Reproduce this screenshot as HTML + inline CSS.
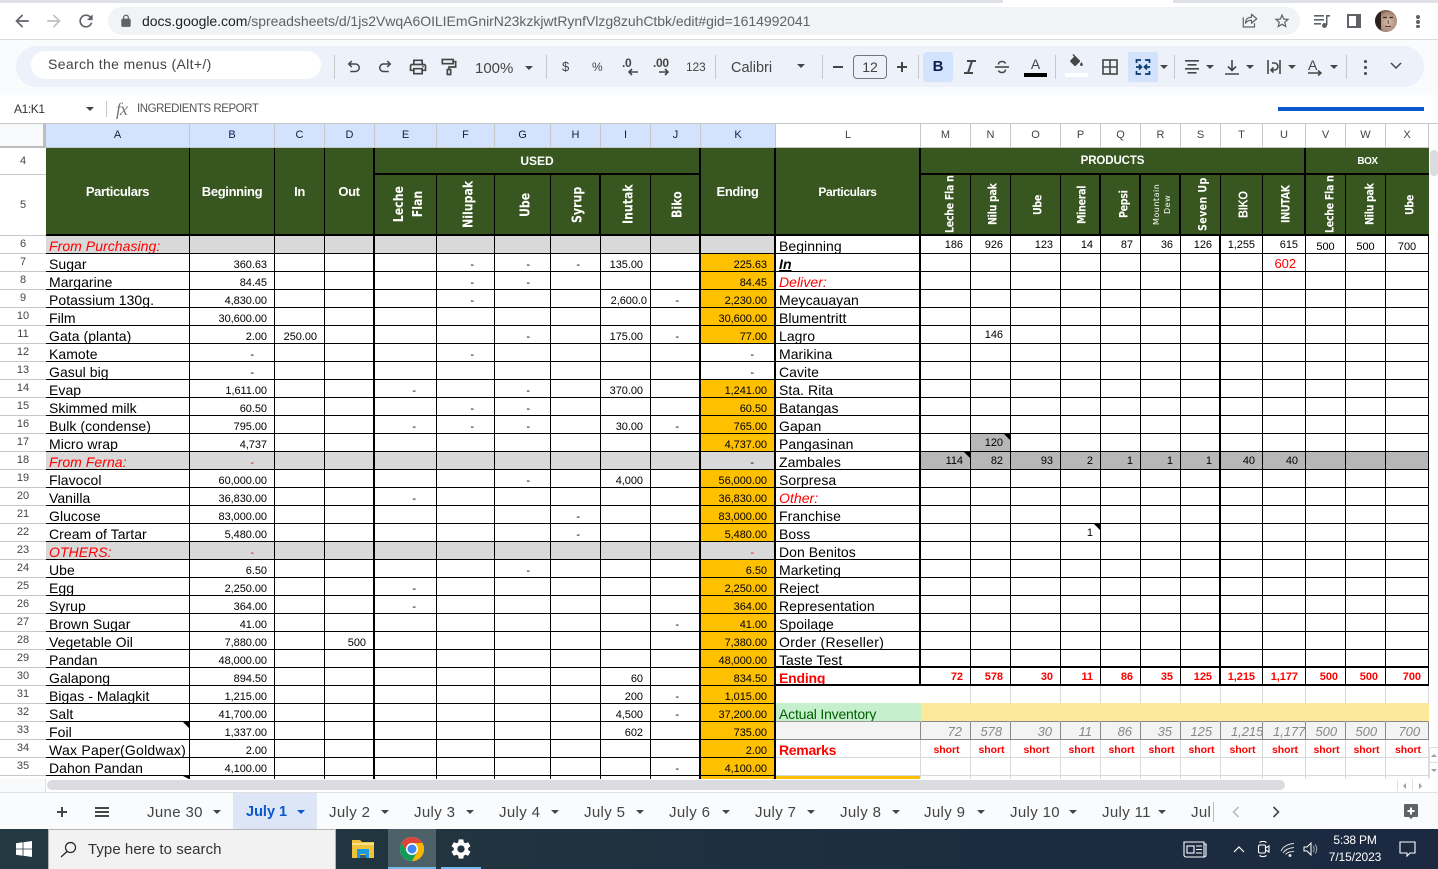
<!DOCTYPE html>
<html><head><meta charset="utf-8"><title>Sheet</title>
<style>
html,body{margin:0;padding:0;width:1438px;height:869px;overflow:hidden;background:#fff;font-family:"Liberation Sans",sans-serif;color:#000}
.x{position:absolute;white-space:nowrap}
.i{position:absolute}
.a{position:absolute;width:0;height:0;border-left:4px solid transparent;border-right:4px solid transparent;border-top:4px solid #444746}
.sp{position:absolute;width:1px;height:24px;top:55px;background:#c7c7c7}
#w{position:absolute;left:0;top:124px;width:1429px;height:655px;overflow:hidden}
table{border-collapse:separate;border-spacing:0;table-layout:fixed;width:1429px}
th{font:400 11px "Liberation Sans",sans-serif;color:#444;height:18px;box-sizing:border-box;padding:0;line-height:17px;border-bottom:1px solid #c7c7c7;background:#fff;text-align:center;overflow:hidden}
td{box-sizing:border-box;height:18px;padding:5px 7px 0 0;border-right:1px solid #000;border-bottom:1px solid #000;font-size:11px;line-height:12px;text-align:right;white-space:nowrap;overflow:hidden;letter-spacing:-.05px;vertical-align:top}
td:nth-of-type(1),td:nth-of-type(12){text-align:left;font-size:14px;line-height:14px;padding:3px 0 0 3px;letter-spacing:.05px}
td:nth-of-type(4),td:nth-of-type(10),td:nth-of-type(11),td:nth-of-type(12){border-right-width:2px}
td:nth-of-type(19){border-right-width:2px}
td:nth-of-type(n+13){padding-top:3px}
td.o{background:#ffc000}
td.d{padding-right:20px}
td.c{text-align:center;padding:5px 0 0 0}
td.r{color:#f00;font-style:italic}
td.n3{padding-right:3px}
tr.y td:nth-of-type(-n+11){background:#d9d9d9}
tr.y2 td:nth-of-type(n+13){background:#b7b7b7}
tr.e td:nth-of-type(n+13){color:#f00;font-weight:bold}
tr.g td:nth-of-type(n+12){border-right-color:#d9d9d9;border-bottom-color:#d9d9d9;border-right-width:1px}
tr.g1 td:nth-of-type(12){border-bottom-color:#c6efce;border-right-color:#fff}
tr.g1 td:nth-of-type(n+13){border-bottom-color:#fde89b}
tr.g2 td:nth-of-type(12){background:#c6efce;color:#006100;border-right-color:#c6efce;border-bottom-color:#999;border-right-width:1px;letter-spacing:-.2px}
tr.g2 td:nth-of-type(n+13){background:#fde89b;border-right-color:#fde89b;border-bottom-color:#888;border-right-width:1px}
tr.g3 td:nth-of-type(12){background:#f3f3f3;border-right-color:#888;border-right-width:1px;border-bottom-color:#888}
tr.g3 td:nth-of-type(n+13){background:#f3f3f3;border-right-color:#888;border-bottom-color:#888;border-right-width:1px;font-size:13px;font-style:italic;color:#888;line-height:14px;padding:3px 8px 0 0}
tr.g3 td.l{text-align:left;padding-left:10px;padding-right:0}
tr.g4 td:nth-of-type(n+13){color:#f00;font-weight:bold;font-size:10.5px;text-align:center;padding:4px 0 0 2px;line-height:13px}
tr.g4 td:nth-of-type(12){color:#f00;font-weight:bold;letter-spacing:-.3px}
td.h{background:#d3e3fd;color:#0b1f4c;text-align:center;padding:0;line-height:22px;font-size:11px;height:24px;border-right:1px solid #c7c7c7;border-bottom:1px solid #c7c7c7;letter-spacing:0}
td.h.w{background:#fff;color:#444}
th.cn{background:#f8f9fa;border-right:3px solid #bdbdbd;border-bottom:2px solid #bdbdbd;height:24px}
td.G{background:#38561f;color:#fff;font-weight:bold;text-align:center;vertical-align:middle;padding:0;font-size:13px;letter-spacing:-.35px;line-height:15px;border-bottom:2px solid #000}
.v{display:block;width:fit-content;height:57px;margin:0 auto;position:relative;left:3px;writing-mode:vertical-rl;transform:rotate(180deg) scaleX(1.2);font:bold 11px/16px "DejaVu Sans",sans-serif;letter-spacing:0;text-align:center;white-space:nowrap}
.v.m{font-size:9.500px;letter-spacing:-.3px;line-height:12px;left:3px}
.v.t{font:400 8px/11px "DejaVu Sans",sans-serif;letter-spacing:.5px;transform:rotate(180deg);left:2px}
.v.b{font:bold 11px/12px "Liberation Sans",sans-serif;letter-spacing:-.2px;left:2px}
.v.lf{left:5px}
.tri{position:absolute;width:0;height:0;border-top:6px solid #000;border-left:6px solid transparent}
.tab{position:absolute;top:804px;font-size:15px;letter-spacing:.35px;color:#444;white-space:nowrap;line-height:17px}
</style></head><body>

<!-- browser chrome -->
<div class="x" style="left:0;top:0;width:1438px;height:3px;background:#dee1e6"></div>
<div class="x" style="left:1003px;top:0;width:170px;height:3px;background:#fff"></div>
<svg class="i" style="left:12px;top:11px" width="20" height="20" viewBox="0 0 24 24" fill="#5f6368"><path d="M20 11H7.83l5.59-5.59L12 4l-8 8 8 8 1.41-1.41L7.83 13H20v-2z"/></svg>
<svg class="i" style="left:44px;top:11px" width="20" height="20" viewBox="0 0 24 24" fill="#bcc0c4"><path d="M4 11h12.17l-5.59-5.59L12 4l8 8-8 8-1.41-1.41L16.17 13H4v-2z"/></svg>
<svg class="i" style="left:76px;top:11px" width="20" height="20" viewBox="0 0 24 24" fill="#5f6368"><path d="M17.65 6.35A7.958 7.958 0 0012 4c-4.42 0-7.99 3.58-7.99 8s3.57 8 7.99 8c3.73 0 6.84-2.55 7.73-6h-2.08A5.99 5.99 0 0112 18c-3.31 0-6-2.69-6-6s2.69-6 6-6c1.66 0 3.14.69 4.22 1.78L13 11h7V4l-2.35 2.35z"/></svg>
<div class="x" style="left:108px;top:7px;width:1192px;height:28px;border-radius:14px;background:#f1f3f4"></div>
<svg class="i" style="left:119px;top:14px" width="14" height="14" viewBox="0 0 24 24" fill="#5f6368"><path d="M18 8h-1V6c0-2.76-2.24-5-5-5S7 3.24 7 6v2H6c-1.1 0-2 .9-2 2v10c0 1.1.9 2 2 2h12c1.1 0 2-.9 2-2V10c0-1.1-.9-2-2-2zM9 6c0-1.66 1.34-3 3-3s3 1.34 3 3v2H9V6z"/></svg>
<div class="x" style="left:142px;top:13px;font-size:14px;line-height:16px;color:#5f6368;letter-spacing:-.03px"><span style="color:#202124">docs.google.com</span>/spreadsheets/d/1js2VwqA6OILIEmGnirN23kzkjwtRynfVlzg8zuhCtbk/edit#gid=1614992041</div>
<svg class="i" style="left:1241px;top:12px" width="18" height="18" viewBox="0 0 24 24" fill="none" stroke="#5f6368" stroke-width="1.6"><path d="M3 7v13h15v-5"/><path d="M21 9l-7-6v4c-5 0-8 3-8 8 2-3 4-4 8-4v4z" stroke-linejoin="round"/></svg>
<svg class="i" style="left:1273px;top:12px" width="18" height="18" viewBox="0 0 24 24" fill="#5f6368"><path d="M22 9.24l-7.19-.62L12 2 9.19 8.63 2 9.24l5.46 4.73L5.82 21 12 17.27 18.18 21l-1.63-7.03L22 9.24zM12 15.4l-3.76 2.27 1-4.28-3.32-2.88 4.38-.38L12 6.1l1.71 4.04 4.38.38-3.32 2.88 1 4.28L12 15.4z"/></svg>
<svg class="i" style="left:1313px;top:12px" width="18" height="18" viewBox="0 0 18 18" fill="#5f6368"><rect x="1" y="3" width="10" height="1.6"/><rect x="1" y="7" width="10" height="1.6"/><rect x="1" y="11" width="7" height="1.6"/><rect x="14" y="3" width="3" height="1.6"/><rect x="13" y="3" width="1.5" height="10"/><circle cx="11.5" cy="13.5" r="2.5"/></svg>
<svg class="i" style="left:1347px;top:14px" width="14" height="14" viewBox="0 0 14 14"><rect x="1" y="1" width="12" height="12" fill="#fff" stroke="#5f6368" stroke-width="2"/><rect x="9" y="1" width="4" height="12" fill="#5f6368"/></svg>
<svg class="i" style="left:1375px;top:10px" width="22" height="22" viewBox="0 0 22 22"><defs><radialGradient id="av" cx=".6" cy=".55" r=".6"><stop offset="0" stop-color="#d8bdae"/><stop offset=".7" stop-color="#ab8b7a"/><stop offset="1" stop-color="#5a463c"/></radialGradient></defs><circle cx="11" cy="11" r="11" fill="url(#av)"/><path d="M0 11a11 11 0 0 1 6-9.800V20A11 11 0 0 1 0 11z" fill="#2a211d"/><path d="M8 7.500h4M14.500 7.500h3.500" stroke="#3a2a24" stroke-width="1.300"/><rect x="12.500" y="10" width="1.500" height="4" fill="#8d6f62"/><rect x="10" y="16" width="6" height="1" fill="#5a3f36"/></svg>
<div class="x" style="left:1416px;top:15px;width:4px;height:4px;border-radius:2px;background:#5f6368"></div>
<div class="x" style="left:1416px;top:20px;width:4px;height:4px;border-radius:2px;background:#5f6368"></div>
<div class="x" style="left:1416px;top:25px;width:4px;height:3px;border-radius:2px;background:#5f6368"></div>
<div class="x" style="left:0;top:39px;width:1438px;height:1px;background:#dadce0"></div>

<!-- toolbar -->
<div class="x" style="left:0;top:40px;width:1438px;height:55px;background:#f9fbfd"></div>
<div class="x" style="left:16px;top:46px;width:1408px;height:41px;border-radius:21px;background:#edf2fa"></div>
<div class="x" style="left:31px;top:51px;width:290px;height:28px;border-radius:14px;background:#fff"></div>
<div class="x" style="left:48px;top:56px;font-size:14px;line-height:16px;color:#444;letter-spacing:.35px">Search the menus (Alt+/)</div>
<div class="sp" style="left:334px"></div>
<svg class="i" style="left:345px;top:58px" width="18" height="18" viewBox="0 0 24 24" fill="none" stroke="#444746" stroke-width="2"><path d="M9 4L5 8l4 4M5 8h9a5 5 0 0 1 0 10H7"/></svg>
<svg class="i" style="left:376px;top:58px" width="18" height="18" viewBox="0 0 24 24" fill="none" stroke="#444746" stroke-width="2"><path d="M15 4l4 4-4 4M19 8h-9a5 5 0 0 0 0 10h7"/></svg>
<svg class="i" style="left:408px;top:57px" width="20" height="20" viewBox="0 0 24 24" fill="#444746"><path d="M19 8h-1V3H6v5H5c-1.66 0-3 1.34-3 3v6h4v4h12v-4h4v-6c0-1.66-1.34-3-3-3zM8 5h8v3H8V5zm8 12v2H8v-4h8v2zm2-2v-2H6v2H4v-4c0-.55.45-1 1-1h14c.55 0 1 .45 1 1v4h-2z"/><circle cx="18" cy="11.5" r="1"/></svg>
<svg class="i" style="left:439px;top:57px" width="20" height="20" viewBox="0 0 24 24" fill="none" stroke="#444746" stroke-width="2"><rect x="4" y="3" width="13" height="5"/><path d="M17 5.5h3V12h-8v3"/><rect x="10" y="15" width="4" height="6"/></svg>
<div class="x" style="left:475px;top:60px;font-size:15px;line-height:17px;color:#444">100%</div>
<div class="a" style="left:525px;top:66px"></div>
<div class="sp" style="left:546px"></div>
<div class="x" style="left:562px;top:59px;font-size:13px;line-height:15px;color:#444">$</div>
<div class="x" style="left:592px;top:60px;font-size:12px;line-height:14px;color:#444">%</div>
<div class="x" style="left:622px;top:56px;font-size:12px;font-weight:bold;line-height:15px;color:#444;letter-spacing:-.3px">.0</div>
<svg class="i" style="left:627px;top:68px" width="12" height="8" viewBox="0 0 12 8" fill="none" stroke="#444746" stroke-width="1.6"><path d="M11 4H2M5 1L2 4l3 3"/></svg>
<div class="x" style="left:653px;top:56px;font-size:12px;font-weight:bold;line-height:15px;color:#444;letter-spacing:-.3px">.00</div>
<svg class="i" style="left:658px;top:68px" width="12" height="8" viewBox="0 0 12 8" fill="none" stroke="#444746" stroke-width="1.6"><path d="M1 4h9M7 1l3 3-3 3"/></svg>
<div class="x" style="left:686px;top:60px;font-size:12px;line-height:14px;color:#444;letter-spacing:-.2px">123</div>
<div class="sp" style="left:715px"></div>
<div class="x" style="left:731px;top:60px;font-size:14.5px;line-height:17px;color:#444">Calibri</div>
<div class="a" style="left:797px;top:64px"></div>
<div class="sp" style="left:822px"></div>
<div class="x" style="left:833px;top:66px;width:10px;height:2px;background:#444746"></div>
<div class="x" style="left:853px;top:55px;width:32px;height:22px;border:1px solid #747775;border-radius:4px;text-align:center;font-size:14px;line-height:22px;color:#444">12</div>
<div class="x" style="left:897px;top:66px;width:10px;height:2px;background:#444746"></div>
<div class="x" style="left:901px;top:62px;width:2px;height:10px;background:#444746"></div>
<div class="sp" style="left:918px"></div>
<div class="x" style="left:923px;top:52px;width:30px;height:30px;border-radius:4px;background:#d3e3fd"></div>
<div class="x" style="left:923px;top:57px;width:30px;text-align:center;font-size:15px;font-weight:bold;line-height:20px;color:#0b1f4c">B</div>
<svg class="i" style="left:961px;top:58px" width="18" height="18" viewBox="0 0 18 18" fill="none" stroke="#444746" stroke-width="2"><path d="M6 3h9M3 15h9M11 3L7 15"/></svg>
<svg class="i" style="left:993px;top:58px" width="18" height="18" viewBox="0 0 18 18" fill="none" stroke="#444746" stroke-width="1.6"><path d="M2 9h14"/><path d="M5.5 6.5C5.5 4.5 7 3.5 9 3.5s3 .8 3.5 2M12.5 11.5c0 2-1.5 3-3.5 3s-3-.8-3.5-2"/></svg>
<div class="x" style="left:1024px;top:57px;width:23px;text-align:center;font-size:14px;line-height:15px;color:#444">A</div>
<div class="x" style="left:1024px;top:73px;width:23px;height:4px;background:#000"></div>
<div class="sp" style="left:1055px"></div>
<svg class="i" style="left:1068px;top:54px" width="17" height="17" viewBox="0 0 24 24" fill="#444746"><path d="M16.56 8.94L7.62 0 6.21 1.41l2.38 2.38-5.15 5.15c-.59.59-.59 1.54 0 2.12l5.5 5.5c.29.29.68.44 1.06.44s.77-.15 1.06-.44l5.5-5.5c.59-.58.59-1.53 0-2.12zM19 11.5s-2 2.17-2 3.5c0 1.1.9 2 2 2s2-.9 2-2c0-1.33-2-3.5-2-3.5z"/></svg>
<div class="x" style="left:1065px;top:73px;width:23px;height:4px;background:#fff"></div>
<svg class="i" style="left:1102px;top:59px" width="16" height="16" viewBox="0 0 16 16" fill="none" stroke="#444746" stroke-width="1.6"><rect x="1" y="1" width="14" height="14"/><path d="M8 1v14M1 8h14"/></svg>
<div class="x" style="left:1128px;top:52px;width:30px;height:30px;border-radius:2px;background:#d3e3fd"></div>
<svg class="i" style="left:1135px;top:59px" width="16" height="16" viewBox="0 0 16 16" fill="none" stroke="#0b3b6f" stroke-width="1.7"><path d="M6 1H1.5v3M10 1h4.500v3M6 15H1.500v-3M10 15h4.500v-3M1 8h5M4 5.500L6.500 8 4 10.500M15 8h-5M12 5.500L9.500 8 12 10.500"/></svg>
<div class="a" style="left:1160px;top:65px"></div>
<div class="sp" style="left:1174px"></div>
<svg class="i" style="left:1184px;top:59px" width="16" height="16" viewBox="0 0 16 16" fill="#444746"><rect x="1" y="1" width="14" height="1.600"/><rect x="3.500" y="5" width="9" height="1.600"/><rect x="1" y="9" width="14" height="1.600"/><rect x="3.500" y="13" width="9" height="1.600"/></svg>
<div class="a" style="left:1206px;top:65px"></div>
<svg class="i" style="left:1224px;top:59px" width="16" height="16" viewBox="0 0 16 16" fill="none" stroke="#444746" stroke-width="1.600"><path d="M1 15h14M8 1v10M4 7.500L8 11.500l4-4"/></svg>
<div class="a" style="left:1246px;top:65px"></div>
<svg class="i" style="left:1266px;top:59px" width="16" height="16" viewBox="0 0 16 16" fill="none" stroke="#444746" stroke-width="1.600"><path d="M2 1v14M14 1v14M6 4h2.500a3 3 0 0 1 0 7H5M7.500 8.500L5 11l2.500 2.500"/></svg>
<div class="a" style="left:1288px;top:65px"></div>
<div class="x" style="left:1308px;top:58px;font-size:14px;line-height:14px;color:#444">A</div>
<svg class="i" style="left:1308px;top:70px" width="16" height="8" viewBox="0 0 16 8" fill="none" stroke="#444746" stroke-width="1.500"><path d="M0 3h13M10 .5L13 3l-3 2.500"/></svg>
<div class="a" style="left:1330px;top:65px"></div>
<div class="sp" style="left:1346px"></div>
<div class="x" style="left:1364px;top:60px;width:3px;height:3px;border-radius:2px;background:#444746"></div>
<div class="x" style="left:1364px;top:66px;width:3px;height:3px;border-radius:2px;background:#444746"></div>
<div class="x" style="left:1364px;top:72px;width:3px;height:3px;border-radius:2px;background:#444746"></div>
<svg class="i" style="left:1390px;top:62px" width="12" height="8" viewBox="0 0 12 8" fill="none" stroke="#444746" stroke-width="1.500"><path d="M1 1l5 5 5-5"/></svg>

<!-- formula bar -->
<div class="x" style="left:14px;top:102px;font-size:12px;line-height:14px;color:#333;letter-spacing:-.4px">A1:K1</div>
<div class="a" style="left:86px;top:107px;border-top-color:#444"></div>
<div class="x" style="left:106px;top:101px;width:1px;height:16px;background:#c7c7c7"></div>
<div class="x" style="left:116px;top:100px;font:italic 18px/18px 'Liberation Serif',serif;color:#777;letter-spacing:-1px">fx</div>
<div class="x" style="left:137px;top:102px;font-size:11.5px;line-height:14px;color:#555;letter-spacing:-.45px">INGREDIENTS REPORT</div>
<div class="x" style="left:1278px;top:107px;width:146px;height:4px;background:#0b57d0"></div>
<div class="x" style="left:0;top:123px;width:1438px;height:1px;background:#c7c7c7"></div>

<!-- sheet -->
<div id="w"><table>
<colgroup><col style="width:46px"><col style="width:144px"><col style="width:85px"><col style="width:50px"><col style="width:50px"><col style="width:62px"><col style="width:58px"><col style="width:56px"><col style="width:50px"><col style="width:50px"><col style="width:50px"><col style="width:75px"><col style="width:145px"><col style="width:50px"><col style="width:40px"><col style="width:50px"><col style="width:40px"><col style="width:40px"><col style="width:40px"><col style="width:40px"><col style="width:42px"><col style="width:43px"><col style="width:40px"><col style="width:40px"><col style="width:43px"></colgroup>
<tr style="height:24px"><th class="cn"></th><td class="h">A<td class="h">B<td class="h">C<td class="h">D<td class="h">E<td class="h">F<td class="h">G<td class="h">H<td class="h">I<td class="h">J<td class="h">K<td class="h w">L<td class="h w">M<td class="h w">N<td class="h w">O<td class="h w">P<td class="h w">Q<td class="h w">R<td class="h w">S<td class="h w">T<td class="h w">U<td class="h w">V<td class="h w">W<td class="h w">X</tr>
<tr style="height:27px"><th style="height:27px;line-height:25px">4</th><td class="G" rowspan="2">Particulars<td class="G" rowspan="2">Beginning<td class="G" rowspan="2">In<td class="G" rowspan="2" style="border-right-width:2px">Out<td class="G" colspan="6" style="font-size:12px;letter-spacing:0;border-right-width:2px;padding-top:2px">USED<td class="G" rowspan="2" style="border-right-width:2px">Ending<td class="G" rowspan="2" style="border-right-width:2px;font-size:12px;padding-top:2px">Particulars<td class="G" colspan="9" style="font-size:11.5px;letter-spacing:-.1px;border-right-width:2px;padding-top:2px">PRODUCTS<td class="G" colspan="3" style="font-size:10px;letter-spacing:-.5px;border-right:0;padding-top:2px">BOX</tr>
<tr style="height:61px"><th style="height:61px;line-height:58px">5</th>
<td class="G"><div class="v" style="height:auto">Leche<br>Flan</div>
<td class="G"><div class="v">Nilupak</div>
<td class="G"><div class="v">Ube</div>
<td class="G"><div class="v">Syrup</div>
<td class="G"><div class="v">Inutak</div>
<td class="G" style="border-right-width:2px"><div class="v">Biko</div>
<td class="G"><div class="v m lf">Leche Fla n</div>
<td class="G"><div class="v m">Nilu pak</div>
<td class="G"><div class="v m">Ube</div>
<td class="G"><div class="v m">Mineral</div>
<td class="G"><div class="v m lf">Pepsi</div>
<td class="G"><div class="v t">Mountain<br>Dew</div>
<td class="G"><div class="v m" style="letter-spacing:.4px">Seven Up</div>
<td class="G"><div class="v b">BIKO</div>
<td class="G" style="border-right-width:2px"><div class="v m">INUTAK</div>
<td class="G"><div class="v m lf">Leche Fla n</div>
<td class="G"><div class="v m lf">Nilu pak</div>
<td class="G" style="border-right:0"><div class="v m">Ube</div></tr>
<tr class="y"><th>6</th><td class="r">From Purchasing:<td><td><td><td><td><td><td><td><td><td><td>Beginning<td>186<td>926<td>123<td>14<td>87<td>36<td>126<td>1,255<td>615<td class="c">500<td class="c">500<td class="c">700</tr>
<tr><th>7</th><td>Sugar<td>360.63<td><td><td><td class="d">-<td class="d">-<td class="d">-<td>135.00<td><td class="o">225.63<td style="font-weight:bold;font-style:italic;text-decoration:underline">In<td><td><td><td><td><td><td><td><td style="color:#f00;font-size:13px;padding:3px 9px 0 0;line-height:14px">602<td><td><td></tr>
<tr><th>8</th><td>Margarine<td>84.45<td><td><td><td class="d">-<td class="d">-<td><td><td><td class="o">84.45<td class="r">Deliver:<td><td><td><td><td><td><td><td><td><td><td><td><td></tr>
<tr><th>9</th><td>Potassium 130g.<td>4,830.00<td><td><td><td class="d">-<td><td><td class="n3">2,600.0<td class="d">-<td class="o">2,230.00<td>Meycauayan<td><td><td><td><td><td><td><td><td><td><td><td><td></tr>
<tr><th>10</th><td>Film<td>30,600.00<td><td><td><td><td><td><td><td><td class="o">30,600.00<td>Blumentritt<td><td><td><td><td><td><td><td><td><td><td><td><td></tr>
<tr><th>11</th><td>Gata (planta)<td>2.00<td>250.00<td><td><td><td class="d">-<td><td>175.00<td class="d">-<td class="o">77.00<td>Lagro<td><td>146<td><td><td><td><td><td><td><td><td><td></tr>
<tr><th>12</th><td>Kamote<td class="d">-<td><td><td><td class="d">-<td><td><td><td><td class="d">-<td>Marikina<td><td><td><td><td><td><td><td><td><td><td><td><td></tr>
<tr><th>13</th><td>Gasul big<td class="d">-<td><td><td><td><td><td><td><td><td class="d">-<td>Cavite<td><td><td><td><td><td><td><td><td><td><td><td><td></tr>
<tr><th>14</th><td>Evap<td>1,611.00<td><td><td class="d">-<td><td class="d">-<td><td>370.00<td><td class="o">1,241.00<td>Sta. Rita<td><td><td><td><td><td><td><td><td><td><td><td><td></tr>
<tr><th>15</th><td>Skimmed milk<td>60.50<td><td><td><td class="d">-<td class="d">-<td><td><td><td class="o">60.50<td>Batangas<td><td><td><td><td><td><td><td><td><td><td><td><td></tr>
<tr><th>16</th><td>Bulk (condense)<td>795.00<td><td><td class="d">-<td class="d">-<td class="d">-<td><td>30.00<td class="d">-<td class="o">765.00<td>Gapan<td><td><td><td><td><td><td><td><td><td><td><td><td></tr>
<tr><th>17</th><td>Micro wrap<td>4,737<td><td><td><td><td><td><td><td><td class="o">4,737.00<td>Pangasinan<td><td style="background:#b7b7b7">120<td><td><td><td><td><td><td><td><td><td></tr>
<tr class="y y2"><th>18</th><td class="r">From Ferna:<td class="d" style="color:#f00">-<td><td><td><td><td><td><td><td><td class="d">-<td>Zambales<td>114<td>82<td>93<td>2<td>1<td>1<td>1<td>40<td>40<td><td><td></tr>
<tr><th>19</th><td>Flavocol<td>60,000.00<td><td><td><td><td class="d">-<td><td>4,000<td><td class="o">56,000.00<td>Sorpresa<td><td><td><td><td><td><td><td><td><td><td><td><td></tr>
<tr><th>20</th><td>Vanilla<td>36,830.00<td><td><td class="d">-<td><td><td><td><td><td class="o">36,830.00<td class="r">Other:<td><td><td><td><td><td><td><td><td><td><td><td><td></tr>
<tr><th>21</th><td>Glucose<td>83,000.00<td><td><td><td><td><td class="d">-<td><td><td class="o">83,000.00<td>Franchise<td><td><td><td><td><td><td><td><td><td><td><td><td></tr>
<tr><th>22</th><td>Cream of Tartar<td>5,480.00<td><td><td><td><td><td class="d">-<td><td><td class="o">5,480.00<td>Boss<td><td><td><td>1<td><td><td><td><td><td><td><td><td></tr>
<tr class="y"><th>23</th><td class="r">OTHERS:<td class="d" style="color:#f00">-<td><td><td><td><td><td><td><td><td class="d" style="color:#f00">-<td>Don Benitos<td><td><td><td><td><td><td><td><td><td><td><td><td></tr>
<tr><th>24</th><td>Ube<td>6.50<td><td><td><td><td class="d">-<td><td><td><td class="o">6.50<td>Marketing<td><td><td><td><td><td><td><td><td><td><td><td><td></tr>
<tr><th>25</th><td>Egg<td>2,250.00<td><td><td class="d">-<td><td><td><td><td><td class="o">2,250.00<td>Reject<td><td><td><td><td><td><td><td><td><td><td><td><td></tr>
<tr><th>26</th><td>Syrup<td>364.00<td><td><td class="d">-<td><td><td><td><td><td class="o">364.00<td>Representation<td><td><td><td><td><td><td><td><td><td><td><td><td></tr>
<tr><th>27</th><td>Brown Sugar<td>41.00<td><td><td><td><td><td><td><td class="d">-<td class="o">41.00<td>Spoilage<td><td><td><td><td><td><td><td><td><td><td><td><td></tr>
<tr><th>28</th><td>Vegetable Oil<td>7,880.00<td><td>500<td><td><td><td><td><td><td class="o">7,380.00<td style="letter-spacing:.3px">Order (Reseller)<td><td><td><td><td><td><td><td><td><td><td><td><td></tr>
<tr><th>29</th><td>Pandan<td>48,000.00<td><td><td><td><td><td><td><td><td class="o">48,000.00<td>Taste Test<td><td><td><td><td><td><td><td><td><td><td><td><td></tr>
<tr class="e"><th>30</th><td>Galapong<td>894.50<td><td><td><td><td><td><td>60<td><td class="o">834.50<td style="color:#f00;font-weight:bold;letter-spacing:-.2px">Ending<td>72<td>578<td>30<td>11<td>86<td>35<td>125<td>1,215<td>1,177<td>500<td>500<td>700</tr>
<tr class="g g1"><th>31</th><td>Bigas - Malagkit<td>1,215.00<td><td><td><td><td><td><td>200<td class="d">-<td class="o">1,015.00<td><td><td><td><td><td><td><td><td><td><td><td><td><td></tr>
<tr class="g2"><th>32</th><td>Salt<td>41,700.00<td><td><td><td><td><td><td>4,500<td class="d">-<td class="o">37,200.00<td>Actual Inventory<td><td><td><td><td><td><td><td><td><td><td><td><td></tr>
<tr class="g3"><th>33</th><td>Foil<td>1,337.00<td><td><td><td><td><td><td>602<td><td class="o">735.00<td><td>72<td>578<td>30<td>11<td>86<td>35<td>125<td class="l">1,215<td class="l">1,177<td>500<td>500<td>700</tr>
<tr class="g g4"><th>34</th><td style="letter-spacing:.25px">Wax Paper(Goldwax)<td>2.00<td><td><td><td><td><td><td><td><td class="o">2.00<td>Remarks<td>short<td>short<td>short<td>short<td>short<td>short<td>short<td>short<td>short<td>short<td>short<td>short</tr>
<tr class="g"><th>35</th><td>Dahon Pandan<td>4,100.00<td><td><td><td><td><td><td><td class="d">-<td class="o">4,100.00<td><td><td><td><td><td><td><td><td><td><td><td><td><td></tr>
<tr class="g"><th>36</th><td><td><td><td><td><td><td><td><td><td><td class="o"><td style="background:#ffc000"><td><td><td><td><td><td><td><td><td><td><td><td></tr>
</table></div>

<div class="x" style="left:776px;top:666px;width:653px;height:2px;background:#000"></div>
<div class="x" style="left:776px;top:684px;width:653px;height:2px;background:#000"></div>
<div class="tri" style="left:183px;top:722px"></div>
<div class="tri" style="left:183px;top:776px;border-top-width:3px"></div>
<div class="tri" style="left:1004px;top:434px"></div>
<div class="tri" style="left:964px;top:452px"></div>
<div class="tri" style="left:1094px;top:524px"></div>

<!-- right scrollbar -->
<div class="x" style="left:1429px;top:124px;width:9px;height:655px;background:#fff"></div>
<div class="x" style="left:1430px;top:150px;width:8px;height:26px;border-radius:4px;background:#dadce0"></div>
<div class="x" style="left:1429px;top:747px;width:9px;height:31px;border-left:1px solid #e0e0e0;border-top:1px solid #e0e0e0;box-sizing:border-box"></div>
<div class="x" style="left:1429px;top:762px;width:9px;height:1px;background:#e0e0e0"></div>
<div class="x" style="left:1431px;top:754px;border-left:3px solid transparent;border-right:3px solid transparent;border-bottom:3px solid #9aa0a6"></div>
<div class="x" style="left:1431px;top:769px;border-left:3px solid transparent;border-right:3px solid transparent;border-top:3px solid #9aa0a6"></div>

<!-- bottom scrollbar -->
<div class="x" style="left:0;top:779px;width:1438px;height:13px;background:#fff"></div>
<div class="x" style="left:0;top:779px;width:45px;height:13px;background:#f8f9fa;border-right:1px solid #e0e0e0"></div>
<div class="x" style="left:47px;top:780px;width:1238px;height:10px;border-radius:5px;background:#dadce0"></div>
<div class="x" style="left:1397px;top:779px;width:28px;height:12px;border-left:1px solid #e0e0e0;box-sizing:border-box"></div>
<div class="x" style="left:1412px;top:779px;width:1px;height:12px;background:#e0e0e0"></div>
<div class="x" style="left:1403px;top:783px;border-top:3px solid transparent;border-bottom:3px solid transparent;border-right:3px solid #9aa0a6"></div>
<div class="x" style="left:1419px;top:783px;border-top:3px solid transparent;border-bottom:3px solid transparent;border-left:3px solid #9aa0a6"></div>

<!-- tabs -->
<div class="x" style="left:0;top:792px;width:1438px;height:37px;background:#f9fbfd;border-top:1px solid #e0e0e0;box-sizing:border-box"></div>
<div class="x" style="left:57px;top:811px;width:10px;height:2px;background:#444746"></div>
<div class="x" style="left:61px;top:807px;width:2px;height:10px;background:#444746"></div>
<div class="x" style="left:95px;top:807px;width:14px;height:2px;background:#444746"></div>
<div class="x" style="left:95px;top:811px;width:14px;height:2px;background:#444746"></div>
<div class="x" style="left:95px;top:815px;width:14px;height:2px;background:#444746"></div>
<div class="x" style="left:233px;top:793px;width:84px;height:36px;background:#dde6f6"></div>
<div class="tab" style="left:147px">June 30</div><div class="a" style="left:213px;top:810px"></div>
<div class="tab" style="left:246px;color:#0b57d0;font-weight:bold;font-size:14.5px;letter-spacing:0">July 1</div><div class="a" style="left:297px;top:810px;border-top-color:#0b57d0"></div>
<div class="tab" style="left:329px">July 2</div><div class="a" style="left:381px;top:810px"></div>
<div class="tab" style="left:414px">July 3</div><div class="a" style="left:466px;top:810px"></div>
<div class="tab" style="left:499px">July 4</div><div class="a" style="left:551px;top:810px"></div>
<div class="tab" style="left:584px">July 5</div><div class="a" style="left:636px;top:810px"></div>
<div class="tab" style="left:669px">July 6</div><div class="a" style="left:722px;top:810px"></div>
<div class="tab" style="left:755px">July 7</div><div class="a" style="left:807px;top:810px"></div>
<div class="tab" style="left:840px">July 8</div><div class="a" style="left:892px;top:810px"></div>
<div class="tab" style="left:924px">July 9</div><div class="a" style="left:977px;top:810px"></div>
<div class="tab" style="left:1010px">July 10</div><div class="a" style="left:1069px;top:810px"></div>
<div class="tab" style="left:1102px">July 11</div><div class="a" style="left:1158px;top:810px"></div>
<div class="tab" style="left:1191px">Jul</div>
<div class="x" style="left:1213px;top:802px;width:1px;height:20px;background:#bdbdbd"></div>
<svg class="i" style="left:1231px;top:806px" width="10" height="12" viewBox="0 0 10 12" fill="none" stroke="#bdbdbd" stroke-width="1.600"><path d="M7.500 1l-5 5 5 5"/></svg>
<svg class="i" style="left:1271px;top:806px" width="10" height="12" viewBox="0 0 10 12" fill="none" stroke="#444746" stroke-width="1.600"><path d="M2.500 1l5 5-5 5"/></svg>
<svg class="i" style="left:1404px;top:804px" width="14" height="16" viewBox="0 0 14 16"><path d="M1 0h12a1 1 0 0 1 1 1v11a1 1 0 0 1-1 1H9l-2 2-2-2H1a1 1 0 0 1-1-1V1a1 1 0 0 1 1-1z" fill="#5f6368"/><path d="M6 3.500h2V6h2.500v2H8v2.500H6V8H3.500V6H6z" fill="#fff"/></svg>

<!-- taskbar -->
<div class="x" style="left:0;top:829px;width:1438px;height:40px;background:linear-gradient(90deg,#233a42 0,#21343f 30%,#1c2c40 70%,#1b2a40 100%)"></div>
<svg class="i" style="left:16px;top:841px" width="16" height="16" viewBox="0 0 16 16" fill="#fff"><path d="M0 2.200L6.600 1.300V7.600H0zM7.400 1.200L16 0V7.600H7.400zM0 8.400H6.600V14.700L0 13.800zM7.400 8.400H16V16L7.400 14.800z"/></svg>
<div class="x" style="left:48px;top:829px;width:288px;height:40px;background:#f2f2f2;border:1px solid #b5b5b5;border-bottom:0;box-sizing:border-box"></div>
<svg class="i" style="left:60px;top:841px" width="17" height="17" viewBox="0 0 17 17" fill="none" stroke="#222" stroke-width="1.200"><circle cx="10.500" cy="6.500" r="5"/><path d="M7 10.500L1 16"/></svg>
<div class="x" style="left:88px;top:841px;font-size:15px;line-height:17px;color:#333;letter-spacing:.05px">Type here to search</div>
<svg class="i" style="left:352px;top:840px" width="22" height="18" viewBox="0 0 22 18"><path d="M0 0h8l2 2h12v16H0z" fill="#f0c33c"/><path d="M0 3h22V5H0z" fill="#fbe08a"/><path d="M5 9h12v9h-3v-4H8v4H5z" fill="#1c9ae0"/><rect x="8" y="15" width="6" height="3" fill="#3a5a7a"/></svg>
<div class="x" style="left:388px;top:829px;width:48px;height:40px;background:#4d6168"></div>
<div class="x" style="left:388px;top:867px;width:48px;height:2px;background:#76b9ed"></div>
<svg class="i" style="left:400px;top:837px" width="24" height="24" viewBox="0 0 24 24"><circle cx="12" cy="12" r="12" fill="#fff"/><path d="M1.610 6A12 12 0 0 1 22.390 6H12A6 6 0 0 0 6.800 15Z" fill="#db4437"/><path d="M22.390 6A12 12 0 0 1 12 24L17.200 15A6 6 0 0 0 12 6Z" fill="#f4b400"/><path d="M12 24A12 12 0 0 1 1.610 6L6.800 15A6 6 0 0 0 17.200 15Z" fill="#0f9d58"/><circle cx="12" cy="12" r="5.500" fill="#fff"/><circle cx="12" cy="12" r="4.500" fill="#4285f4"/></svg>
<svg class="i" style="left:449px;top:837px" width="24" height="24" viewBox="0 0 24 24" fill="#fff"><path d="M19.140 12.940c.04-.3.060-.61.060-.94 0-.32-.020-.64-.070-.94l2.030-1.580c.18-.14.230-.41.120-.61l-1.920-3.320c-.12-.22-.37-.29-.59-.22l-2.390.96c-.5-.38-1.030-.7-1.620-.94l-.36-2.540c-.04-.24-.24-.41-.48-.41h-3.840c-.24 0-.43.17-.47.41l-.36 2.540c-.59.24-1.130.57-1.620.94l-2.390-.96c-.22-.08-.47 0-.59.22L2.740 8.870c-.12.21-.08.47.12.61l2.030 1.580c-.05.3-.09.63-.09.94s.02.64.07.94l-2.030 1.580c-.18.14-.23.41-.12.61l1.920 3.320c.12.22.37.29.59.22l2.390-.96c.5.38 1.030.7 1.620.94l.36 2.540c.05.24.24.41.48.41h3.840c.24 0 .44-.17.47-.41l.36-2.540c.59-.24 1.130-.56 1.620-.94l2.390.96c.22.08.47 0 .59-.22l1.920-3.320c.12-.22.070-.47-.12-.61l-2.010-1.580zM12 15.600c-1.980 0-3.600-1.620-3.600-3.600s1.620-3.600 3.600-3.600 3.600 1.620 3.600 3.600-1.620 3.600-3.600 3.600z"/></svg>
<div class="x" style="left:441px;top:867px;width:40px;height:2px;background:#76b9ed"></div>
<svg class="i" style="left:1183px;top:841px" width="24" height="17" viewBox="0 0 24 17" fill="none" stroke="#fff" stroke-width="1.100"><path d="M1 1h20v15H3a2 2 0 0 1-2-2zM21 3h2v11a2 2 0 0 1-2 2"/><rect x="4" y="5" width="7" height="7"/><path d="M13 5h6M13 8.500h6M13 12h6"/></svg>
<svg class="i" style="left:1233px;top:845px" width="12" height="8" viewBox="0 0 12 8" fill="none" stroke="#fff" stroke-width="1.200"><path d="M1 7l5-5 5 5"/></svg>
<svg class="i" style="left:1257px;top:840px" width="13" height="18" viewBox="0 0 13 18" fill="none" stroke="#fff" stroke-width="1.100"><rect x="1.500" y="5" width="7" height="8" rx="1.500"/><path d="M8.500 8l3.500-2v6l-3.500-2M2.500 2.500c2-1.500 5-1.500 7 0M2.500 15.500c2 1.500 5 1.500 7 0"/></svg>
<svg class="i" style="left:1280px;top:842px" width="15" height="15" viewBox="0 0 15 15" fill="none" stroke="#ddd" stroke-width="1"><path d="M1 9c2.500-5 7-7 13-7.500M3 11c2-3.500 5.500-5 11-5.500M5.500 12.500c1.500-2 4-3 8.500-3"/><circle cx="10" cy="13.500" r="1" fill="#fff"/></svg>
<svg class="i" style="left:1303px;top:842px" width="16" height="14" viewBox="0 0 16 14" fill="none" stroke="#fff" stroke-width="1"><path d="M1 5h3l4-4v12l-4-4H1z"/><path d="M10 4c1.500 1.500 1.500 4.500 0 6M12 2.500c2.300 2.500 2.300 6.500 0 9" stroke="#aaa"/></svg>
<div class="x" style="left:1329px;top:833px;width:52px;text-align:center;font-size:12px;line-height:14px;color:#fff;letter-spacing:-.2px">5:38 PM</div>
<div class="x" style="left:1325px;top:850px;width:60px;text-align:center;font-size:12px;line-height:14px;color:#fff;letter-spacing:-.1px">7/15/2023</div>
<svg class="i" style="left:1399px;top:841px" width="17" height="17" viewBox="0 0 17 17" fill="none" stroke="#fff" stroke-width="1.100"><path d="M1 1h15v11h-5l-3 3v-3H1z"/></svg>
</body></html>
